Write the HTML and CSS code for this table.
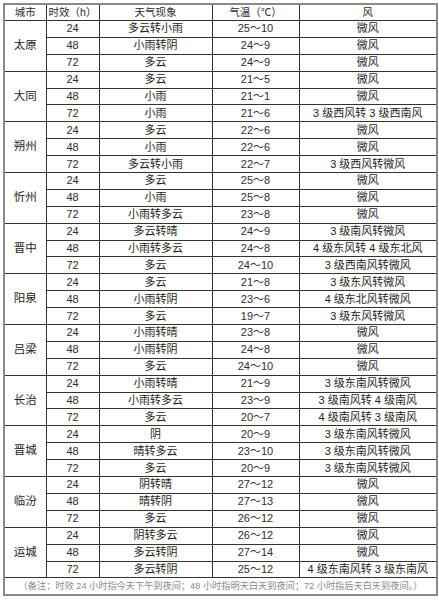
FILE: index.html
```html
<!DOCTYPE html>
<html lang="zh-CN">
<head>
<meta charset="utf-8">
<link rel="stylesheet" href="styles.css">
</head>
<body>
<table class="wx">
<colgroup>
<col class="c-city"><col class="c-hour"><col class="c-sky"><col class="c-temp"><col class="c-wind">
</colgroup>
<thead>
<tr class="head"><th>城市</th><th>时效（h）</th><th>天气现象</th><th>气温（℃）</th><th>风</th></tr>
</thead>
<tbody>
<tr><td rowspan="3" class="city">太原</td><td class="num">24</td><td>多云转小雨</td><td class="num">25～10</td><td>微风</td></tr>
<tr><td class="num">48</td><td>小雨转阴</td><td class="num">24～9</td><td>微风</td></tr>
<tr><td class="num">72</td><td>多云</td><td class="num">24～9</td><td>微风</td></tr>

<tr><td rowspan="3" class="city">大同</td><td class="num">24</td><td>多云</td><td class="num">21～5</td><td>微风</td></tr>
<tr><td class="num">48</td><td>小雨</td><td class="num">21～1</td><td>微风</td></tr>
<tr><td class="num">72</td><td>小雨</td><td class="num">21～6</td><td>3 级西风转 3 级西南风</td></tr>

<tr><td rowspan="3" class="city">朔州</td><td class="num">24</td><td>多云</td><td class="num">22～6</td><td>微风</td></tr>
<tr><td class="num">48</td><td>小雨</td><td class="num">22～6</td><td>微风</td></tr>
<tr><td class="num">72</td><td>多云转小雨</td><td class="num">22～7</td><td>3 级西风转微风</td></tr>

<tr><td rowspan="3" class="city">忻州</td><td class="num">24</td><td>多云</td><td class="num">25～8</td><td>微风</td></tr>
<tr><td class="num">48</td><td>小雨</td><td class="num">25～8</td><td>微风</td></tr>
<tr><td class="num">72</td><td>小雨转多云</td><td class="num">23～8</td><td>微风</td></tr>

<tr><td rowspan="3" class="city">晋中</td><td class="num">24</td><td>多云转晴</td><td class="num">24～9</td><td>3 级南风转微风</td></tr>
<tr><td class="num">48</td><td>小雨转多云</td><td class="num">24～8</td><td>4 级东风转 4 级东北风</td></tr>
<tr><td class="num">72</td><td>多云</td><td class="num">24～10</td><td>3 级西南风转微风</td></tr>

<tr><td rowspan="3" class="city">阳泉</td><td class="num">24</td><td>多云</td><td class="num">21～8</td><td>3 级东风转微风</td></tr>
<tr><td class="num">48</td><td>小雨转阴</td><td class="num">23～6</td><td>4 级东北风转微风</td></tr>
<tr><td class="num">72</td><td>多云</td><td class="num">19～7</td><td>3 级东风转微风</td></tr>

<tr><td rowspan="3" class="city">吕梁</td><td class="num">24</td><td>小雨转晴</td><td class="num">23～8</td><td>微风</td></tr>
<tr><td class="num">48</td><td>小雨转阴</td><td class="num">24～8</td><td>微风</td></tr>
<tr><td class="num">72</td><td>多云</td><td class="num">24～10</td><td>微风</td></tr>

<tr><td rowspan="3" class="city">长治</td><td class="num">24</td><td>小雨转晴</td><td class="num">21～9</td><td>3 级东南风转微风</td></tr>
<tr><td class="num">48</td><td>小雨转多云</td><td class="num">23～9</td><td>3 级南风转 4 级南风</td></tr>
<tr><td class="num">72</td><td>多云</td><td class="num">20～7</td><td>4 级南风转 3 级南风</td></tr>

<tr><td rowspan="3" class="city">晋城</td><td class="num">24</td><td>阴</td><td class="num">20～9</td><td>3 级东南风转微风</td></tr>
<tr><td class="num">48</td><td>晴转多云</td><td class="num">23～10</td><td>3 级东南风转微风</td></tr>
<tr><td class="num">72</td><td>多云</td><td class="num">20～9</td><td>3 级东南风转微风</td></tr>

<tr><td rowspan="3" class="city">临汾</td><td class="num">24</td><td>阴转晴</td><td class="num">27～12</td><td>微风</td></tr>
<tr><td class="num">48</td><td>晴转阴</td><td class="num">27～13</td><td>微风</td></tr>
<tr><td class="num">72</td><td>多云</td><td class="num">26～12</td><td>微风</td></tr>

<tr><td rowspan="3" class="city">运城</td><td class="num">24</td><td>阴转多云</td><td class="num">26～12</td><td>微风</td></tr>
<tr><td class="num">48</td><td>多云转阴</td><td class="num">27～14</td><td>微风</td></tr>
<tr><td class="num">72</td><td>多云转阴</td><td class="num">25～12</td><td>4 级东南风转 3 级东南风</td></tr>
</tbody>
<tfoot>
<tr class="note"><td colspan="5">（备注：时效 24 小时指今天下午到夜间；48 小时指明天白天到夜间；72 小时指后天白天到夜间。）</td></tr>
</tfoot>
</table>
</body>
</html>
```

FILE: styles.css
```css
html, body {
  margin: 0;
  padding: 0;
  background: #ffffff;
}

body {
  padding: 3px 0 0 3px;
  font-family: "Liberation Sans", "Noto Sans CJK SC", sans-serif;
  color: #1e1e1e;
}

.wx {
  border-collapse: collapse;
  table-layout: fixed;
  width: 433px;
  border: 2px solid #8a8a8a;
  font-size: 11px;
  line-height: 1;
}

.c-city { width: 42px; }
.c-hour { width: 53px; }
.c-sky  { width: 113px; }
.c-temp { width: 87px; }
.c-wind { width: 138px; }

.wx th,
.wx td {
  border: 1px solid #333333;
  padding: 0;
  text-align: center;
  vertical-align: middle;
  font-weight: normal;
  white-space: nowrap;
  overflow: hidden;
}

.head th {
  height: 15px;
  font-size: 10.5px;
  color: #2a2a2a;
}

tbody tr {
  height: 16.9px;
}

.city {
  font-size: 11.5px;
}

.num {
  color: #2e2e2e;
}

.note td {
  height: 16px;
  font-size: 9.2px;
  color: #8a8a8a;
  border-top: 1px solid #333333;
}
```
